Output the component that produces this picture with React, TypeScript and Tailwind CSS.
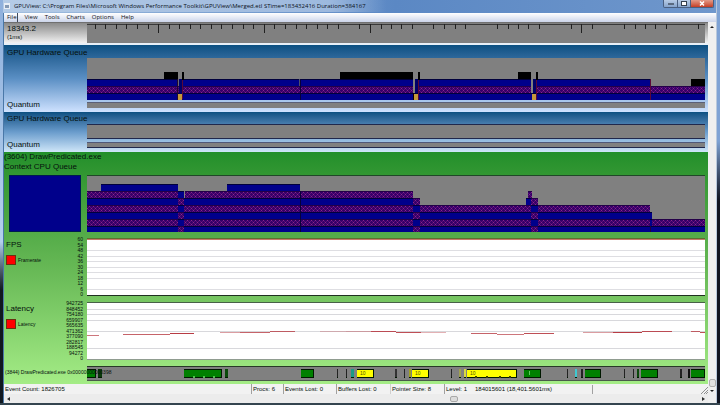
import React, { FC, ReactNode } from "react";

const MENUS = ["File", "View", "Tools", "Charts", "Options", "Help"];

const FPS_TICKS = [60, 54, 48, 42, 36, 30, 24, 18, 12, 6, 0];
const LATENCY_TICKS = [
  942725, 848452, 754180, 659907, 565635, 471362, 377090, 282817, 188545,
  94272, 0,
];

// every plot uses the same time axis, 618 units wide
const SPAN = 618;
const pct = (value: number) => `${(value / SPAN) * 100}%`;

const BLUE = "#00008b";
const HATCH = "url(#hatch)";
const GOLD = "#c49a3c";

// x, y, width, height, fill
type Bar = [number, number, number, number, string];

const HARDWARE_BARS: Bar[] = [
  [0, 21, 563, 7, BLUE],
  [0, 28, 618, 7, HATCH],
  [0, 35, 618, 7, BLUE],
  [77, 14, 14, 7, "#000"],
  [95, 14, 2, 8, "#000"],
  [253, 14, 73, 7, "#000"],
  [331, 14, 2, 8, "#000"],
  [431, 14, 13, 7, "#000"],
  [449, 14, 2, 8, "#000"],
  [604, 21, 14, 7, "#000"],
  [90, 21, 1, 21, "#200830"],
  [91, 21, 1, 7, "#6c6c78"],
  [92, 21, 3, 15, "#00006a"],
  [95, 22, 1, 19, "#5a0838"],
  [91, 36, 4, 6, GOLD],
  [212, 21, 1, 7, "#50506a"],
  [213, 21, 1, 21, "#08003a"],
  [326, 21, 2, 14, "#808080"],
  [326, 35, 1, 7, "#100"],
  [328, 21, 3, 14, "#00006a"],
  [331, 22, 1, 20, "#5a0838"],
  [327, 36, 4, 6, GOLD],
  [444, 21, 2, 14, "#808080"],
  [446, 21, 3, 14, "#00006a"],
  [449, 22, 1, 20, "#5a0838"],
  [445, 36, 4, 6, GOLD],
  [563, 21, 1, 21, "#5a0838"],
];

const CONTEXT_BARS: Bar[] = [
  [14, 8, 77, 7, BLUE],
  [140, 8, 73, 7, BLUE],
  [0, 15, 91, 7, HATCH],
  [91, 15, 6, 7, BLUE],
  [98, 15, 228, 7, HATCH],
  [0, 22, 333, 7, BLUE],
  [0, 29, 563, 7, HATCH],
  [0, 36, 565, 7, BLUE],
  [0, 43, 618, 7, HATCH],
  [0, 50, 618, 7, BLUE],
  [91, 22, 6, 7, HATCH],
  [91, 29, 6, 7, BLUE],
  [91, 36, 6, 7, HATCH],
  [91, 43, 6, 7, BLUE],
  [91, 50, 6, 7, HATCH],
  [213, 15, 1, 42, "#08003a"],
  [326, 22, 7, 7, HATCH],
  [326, 29, 7, 7, BLUE],
  [326, 36, 7, 7, HATCH],
  [326, 43, 7, 7, BLUE],
  [326, 50, 7, 7, HATCH],
  [441, 15, 4, 7, HATCH],
  [439, 22, 5, 7, BLUE],
  [444, 22, 7, 7, HATCH],
  [444, 29, 7, 7, BLUE],
  [444, 36, 7, 7, HATCH],
  [444, 43, 7, 7, BLUE],
  [444, 50, 7, 7, HATCH],
  [563, 43, 2, 7, BLUE],
  [563, 50, 1, 7, "#200040"],
];

const RULER_TICKS = [
  8, 18, 29, 39, 50, 61, 71, 82, 92, 103, 113, 124, 134, 145, 156, 166, 177,
  187, 198, 209, 219, 230, 240, 251, 272, 283, 294, 304, 314, 325, 346, 357,
  368, 378, 410, 421, 431, 441, 452, 484, 494, 505, 537, 548, 558, 568, 579,
  611,
];
const LONG_TICKS = [71, 177, 283, 494];

// x1, x2, y, opacity
const LATENCY_LINE: [number, number, number, number][] = [
  [0, 12, 33, 0.7],
  [36, 83, 32, 0.8],
  [83, 107, 31, 1],
  [133, 153, 30, 0.5],
  [153, 183, 30, 0.8],
  [183, 208, 29, 0.8],
  [233, 259, 29, 0.3],
  [259, 284, 29, 0.4],
  [284, 309, 29, 0.9],
  [309, 334, 30, 0.9],
  [334, 359, 30, 0.4],
  [384, 410, 31, 0.8],
  [410, 437, 32, 0.7],
  [437, 467, 31, 0.9],
  [496, 526, 30, 0.5],
  [526, 555, 30, 1],
  [555, 585, 29, 0.9],
  [604, 613, 29, 0.8],
  [613, 618, 30, 0.9],
];

const GREEN = "#008000";
const YELLOW = "#ffff00";
const TEAL = "#1a9c86";

// x, width, fill
const THREAD_BLOCKS: [number, number, string][] = [
  [0, 9, GREEN],
  [11, 4, "#0a3a0a"],
  [97, 38, GREEN],
  [138, 3, "#0a4a0a"],
  [214, 13, GREEN],
  [250, 1, "#222"],
  [259, 1, "#222"],
  [264, 3, TEAL],
  [270, 17, YELLOW],
  [308, 2, "#333"],
  [317, 1, "#222"],
  [322, 2, "#a0a020"],
  [325, 17, YELLOW],
  [364, 1, "#222"],
  [372, 2, "#a0a050"],
  [377, 2, "#d8d840"],
  [380, 50, YELLOW],
  [437, 17, GREEN],
  [480, 1, "#222"],
  [488, 2, "#40c8d0"],
  [494, 2, "#222"],
  [498, 16, GREEN],
  [537, 1, "#222"],
  [546, 1, "#222"],
  [550, 2, "#0a4a0a"],
  [554, 17, GREEN],
  [593, 2, "#222"],
  [601, 2, "#111"],
  [604, 14, GREEN],
];

interface BarPlotProps {
  bars: Bar[];
  className: string;
}

const BarPlot: FC<BarPlotProps> = ({ bars, className }) => (
  <svg className={`block w-full bg-[#808080] ${className}`}>
    <defs>
      <pattern id="hatch" width="4" height="4" patternUnits="userSpaceOnUse">
        <rect width="4" height="4" fill="#340068" />
        <path d="M0 0h1v1H0zM2 2h1v1H2z" fill="#8c2688" />
        <path d="M1 1h1v1H1zM3 3h1v1H3zM3 1h1v1H3zM1 3h1v1H1z" fill="#5c0c78" />
      </pattern>
    </defs>
    {bars.map(([x, y, width, height, fill], i) => (
      <g key={i}>
        <rect x={pct(x)} y={y} width={pct(width)} height={height} fill={fill} />
        {(fill === BLUE || fill === HATCH) && (
          <rect
            x={pct(x)}
            y={y}
            width={pct(width)}
            height={1}
            fill={fill === BLUE ? "#00003c" : "#240048"}
          />
        )}
      </g>
    ))}
  </svg>
);

interface ChartProps {
  title: string;
  legend: string;
  ticks: number[];
  children: ReactNode;
}

const Chart: FC<ChartProps> = ({ title, legend, ticks, children }) => (
  <div className="grid grid-cols-[83px_1fr]">
    <div className="flex justify-between pr-1 pl-[2px]">
      <div className="pt-[2px]">
        <h3 className="leading-[10px]">{title}</h3>
        <div className="mt-[5px] flex items-center gap-[2px] text-[5px] leading-[10px]">
          <span className="size-[10px] border border-[#6a3010] bg-[#ff0000]" />
          {legend}
        </div>
      </div>
      <ol className="-mt-px flex flex-col justify-between text-right text-[5px] leading-[4px]">
        {ticks.map((tick) => (
          <li key={tick}>{tick}</li>
        ))}
      </ol>
    </div>
    {children}
  </div>
);

const TitleBar: FC = () => (
  <header className="flex h-[13px] items-start bg-linear-to-r from-[#a3bfdf] via-[#5b88c4] via-55% to-[#6f97cc]">
    <div className="flex h-3 items-center gap-1 bg-linear-to-r from-[#b4cbe6] via-[#9db9de] via-85% to-transparent pr-5 pl-px">
      <svg className="size-[6px]" viewBox="0 0 6 6">
        <rect width="6" height="6" fill="#e8eef6" />
        <rect x="1" y="2" width="4" height="3" fill="#8499b4" />
      </svg>
      <h1 className="font-['Open_Sans',sans-serif] text-[6px] leading-[12px] whitespace-nowrap text-[#0a1020]">
        GPUView: C:\Program Files\Microsoft Windows Performance
        Toolkit\GPUView\Merged.etl STime=183432416 Duration=384167
      </h1>
    </div>
    <div className="mr-[2px] ml-auto flex h-2 overflow-hidden rounded-b-xs border border-t-0 border-[#4a5f80]">
      <button
        aria-label="Minimize"
        className="flex w-[14px] items-center justify-center border-r border-[#4a5f80] bg-linear-to-b from-[#b8cce6] to-[#86a4cc]"
      >
        <span className="h-[2px] w-[6px] border border-[#5a6a80] bg-white" />
      </button>
      <button
        aria-label="Maximize"
        className="flex w-[13px] items-center justify-center border-r border-[#4a5f80] bg-linear-to-b from-[#b8cce6] to-[#86a4cc]"
      >
        <span className="h-[5px] w-[6px] border border-[#34404f] bg-white" />
      </button>
      <button
        aria-label="Close"
        className="flex w-[22px] items-center justify-center bg-linear-to-b from-[#e29a88] to-[#c43c22]"
      >
        <svg className="h-[5px] w-[6px]" viewBox="0 0 6 5">
          <path d="M1 0.5l4 4M5 0.5l-4 4" stroke="#fff" strokeWidth="1.5" />
        </svg>
      </button>
    </div>
  </header>
);

const MenuBar: FC = () => (
  <nav className="flex h-[9px] items-center gap-[7px] bg-linear-to-b from-white to-[#ccd5ea] pl-[3px] font-['Open_Sans',sans-serif] text-[6px] leading-[9px] text-[#101018]">
    {MENUS.map((menu) => (
      <button
        key={menu}
        className={menu === "File" ? "border-r border-[#404858]" : ""}
      >
        {menu}
      </button>
    ))}
  </nav>
);

const Ruler: FC = () => (
  <section className="grid grid-cols-[83px_1fr] border-t border-b-2 border-t-[#707070] border-b-[#e8f0f8] bg-linear-to-b from-[#8c8c8c] to-[#f2f2f2] pr-[3px]">
    <div className="pt-px pl-[3px]">
      <p className="leading-[9px]">18343.2</p>
      <p className="text-[6px] leading-[9px]">(1ms)</p>
    </div>
    <svg className="block h-5 w-full bg-[#808080]">
      <rect y="1" width="100%" height="1" fill="#383838" />
      {RULER_TICKS.map((tick) => (
        <rect
          key={tick}
          x={pct(tick)}
          y="1"
          width="1"
          height={LONG_TICKS.includes(tick) ? 9 : 5}
          fill="#202020"
        />
      ))}
    </svg>
  </section>
);

const HardwareQueues: FC = () => (
  <>
    <section className="bg-linear-to-b from-[#0a5082] via-[#5a8fc4] to-[#cfe2ff] pr-[3px] pb-1">
      <h2 className="h-[13px] pt-[3px] pl-[3px] leading-[10px]">
        GPU Hardware Queue
      </h2>
      <div className="grid grid-cols-[83px_1fr] gap-y-[2px]">
        <BarPlot bars={HARDWARE_BARS} className="col-start-2 h-[42px]" />
        <h3 className="pl-[3px] leading-[6px]">Quantum</h3>
        <div className="border-t border-[#5a6078] bg-[#808080]" />
      </div>
    </section>
    <section className="bg-linear-to-b from-[#0a5082] via-[#6a9ccc] to-[#cfe6f8] pr-[3px] pb-1">
      <h2 className="h-3 pt-[2px] pl-[3px] leading-[10px]">
        GPU Hardware Queue
      </h2>
      <div className="grid grid-cols-[83px_1fr] gap-y-[3px]">
        <div className="col-start-2 h-[15px] border-y border-[#20284c] bg-[#808080]" />
        <h3 className="pl-[3px] leading-[6px]">Quantum</h3>
        <div className="border-y border-t-[#505878] border-b-[#20284c] bg-[#808080]" />
      </div>
    </section>
  </>
);

const FpsPlot: FC = () => (
  <svg className="block h-[58px] w-full bg-white">
    {[12, 18, 23, 29, 34, 40, 51].map((y) => (
      <rect key={y} y={y} width="100%" height="1" fill="#dedee2" />
    ))}
    <rect width="100%" height="1" fill="#5c7030" />
    <rect y="1" width="100%" height="1" fill="#c87868" />
    <rect y="57" width="100%" height="1" fill="#203020" />
  </svg>
);

const LatencyPlot: FC = () => (
  <svg className="block h-[58px] w-full bg-white">
    {[7, 12, 18, 29, 46].map((y) => (
      <rect key={y} y={y} width="100%" height="1" fill="#d8d8dc" />
    ))}
    <rect width="100%" height="1" fill="#486048" />
    <rect y="57" width="100%" height="1" fill="#909c90" />
    {LATENCY_LINE.map(([start, end, y, opacity]) => (
      <rect
        key={start}
        x={pct(start)}
        y={y}
        width={pct(end - start)}
        height="1"
        fill="#b83c44"
        opacity={opacity}
      />
    ))}
  </svg>
);

const ThreadPlot: FC = () => (
  <svg className="block h-[15px] w-full bg-[#808080]">
    <rect width="100%" height="1" fill="#283828" />
    <rect y="14" width="100%" height="1" fill="#4a5a4a" />
    {THREAD_BLOCKS.map(([x, width, fill]) => (
      <g key={x}>
        <rect x={pct(x)} y="3" width={pct(width)} height="9" fill="#001800" />
        <rect
          x={pct(x)}
          y={width > 4 ? 4 : 3}
          width={pct(width > 4 ? width - 1 : width)}
          height={width > 4 ? 7 : 8}
          fill={fill}
        />
        {fill === YELLOW && (
          <text x={pct(x + 3)} y="9" fill="#505000" className="text-[5px]">
            10
          </text>
        )}
      </g>
    ))}
    {[106, 116, 126, 388, 399, 412, 422].map((x) => (
      <rect
        key={x}
        x={pct(x)}
        y="10"
        width="2"
        height="2"
        fill={x < 200 ? "#50c050" : "#404000"}
      />
    ))}
    <rect x={pct(442)} y="5" width="1" height="4" fill="#60c860" />
  </svg>
);

const ProcessSection: FC = () => (
  <section className="bg-linear-to-b from-[#228f2a] via-[#66b855] via-50% to-[#a4ec86] pr-[3px] pb-[3px]">
    <h2 className="h-[23px] leading-[10px]">
      (3604) DrawPredicated.exe
      <br />
      Context CPU Queue
    </h2>
    <div className="flex flex-col gap-[6px]">
      <div className="grid grid-cols-[83px_1fr]">
        <div className="mr-[6px] ml-[5px] border border-[#001a50] bg-[#00008b]" />
        <BarPlot
          bars={CONTEXT_BARS}
          className="h-[57px] border-t border-[#204828]"
        />
      </div>
      <Chart title="FPS" legend="Framerate" ticks={FPS_TICKS}>
        <FpsPlot />
      </Chart>
      <Chart title="Latency" legend="Latency" ticks={LATENCY_TICKS}>
        <LatencyPlot />
      </Chart>
      <div className="grid grid-cols-[83px_1fr]">
        <p className="relative z-10 w-0 pl-px text-[5px] leading-[13px] whitespace-nowrap">
          (3844) DrawPredicated.exe 0x00000000000398
        </p>
        <div className="col-start-2">
          <ThreadPlot />
        </div>
      </div>
    </div>
  </section>
);

const StatusBar: FC = () => (
  <footer className="flex h-[10px] items-center bg-[#f2f2f2] pl-px text-[6px] leading-[10px] whitespace-nowrap">
    <span className="flex-1">Event Count: 1826705</span>
    <span className="w-8 border-l border-[#a0a0a0] pl-px">Procs: 6</span>
    <span className="w-[53px] border-l border-[#a0a0a0] pl-px">
      Events Lost: 0
    </span>
    <span className="w-[54px] border-l border-[#a0a0a0] pl-px">
      Buffers Lost: 0
    </span>
    <span className="w-[54px] border-l border-[#d0d0d0] pl-px">
      Pointer Size: 8
    </span>
    <span className="w-[31px] border-l border-[#a0a0a0] pl-px">Level: 1</span>
    <span className="w-[117px]">184015601 (18,401.5601ms)</span>
    <span className="flex w-[116px] justify-end border-l border-[#a0a0a0]">
      <svg className="mt-[2px] size-[7px]" viewBox="0 0 7 7">
        <path d="M0 7L7 0M3 7l4-4M5 7l2-2" stroke="#909090" />
      </svg>
    </span>
  </footer>
);

const HorizontalScrollbar: FC = () => (
  <div className="flex h-[9px] items-center justify-between bg-[#ececec] px-[3px]">
    <button aria-label="Scroll left">
      <svg className="h-1 w-[3px]" viewBox="0 0 3 4">
        <path d="M3 0v4L0 2z" fill="#303030" />
      </svg>
    </button>
    <span className="ml-[28%] h-[6px] w-2 rounded-xs border border-[#a8a8a8] bg-[#dcdcdc]" />
    <button aria-label="Scroll right">
      <svg className="h-1 w-[3px]" viewBox="0 0 3 4">
        <path d="M0 0v4l3-2z" fill="#303030" />
      </svg>
    </button>
  </div>
);

const VerticalScrollbar: FC = () => (
  <div className="flex w-2 flex-col items-center bg-[#efefef] pt-1 pb-[11px]">
    <button aria-label="Scroll up">
      <svg className="block h-[2px] w-1" viewBox="0 0 4 2">
        <path d="M0 2h4L2 0z" fill="#202020" />
      </svg>
    </button>
    <span className="mt-auto h-2 w-[7px] rounded-xs border border-[#b0b0b0] bg-[#e0e0e0]" />
    <button aria-label="Scroll down" className="mt-[3px]">
      <svg className="block h-[2px] w-1" viewBox="0 0 4 2">
        <path d="M0 0h4L2 2z" fill="#202020" />
      </svg>
    </button>
  </div>
);

const App: FC = () => {
  return (
    <main className="flex w-full flex-col overflow-hidden bg-[#6a91c6] font-['Liberation_Sans',Arial,sans-serif] text-[8px] text-[#05100c]">
      <div className="flex">
        <div className="w-[3px] bg-linear-to-b from-[#8fb0dc] via-[#b4d0ee] via-60% to-[#101820] to-72%" />
        <div className="min-w-0 flex-1">
          <TitleBar />
          <div className="border-l border-[#4a78a8]">
            <MenuBar />
            <div className="flex">
              <div className="min-w-0 flex-1">
                <Ruler />
                <HardwareQueues />
                <ProcessSection />
                <StatusBar />
                <HorizontalScrollbar />
              </div>
              <VerticalScrollbar />
            </div>
          </div>
        </div>
        <div className="w-1 border-l border-[#b8c8dc] bg-linear-to-b from-[#7ea2d4] via-[#7ea2d4] via-35% to-[#101420] to-50%" />
      </div>
      <div className="h-[2px] bg-[#34454f]" />
    </main>
  );
};

export default App;
